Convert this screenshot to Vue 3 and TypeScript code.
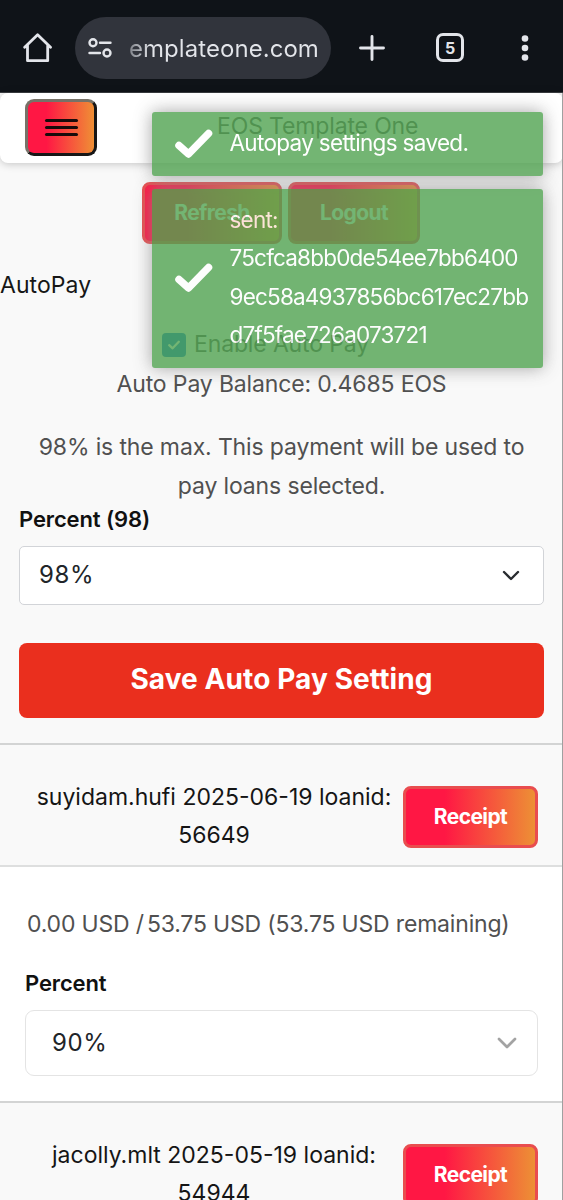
<script setup lang="ts">
interface Loan {
  owner: string
  date: string
  id: string
  percent: string
  summary: string[]
}

const loans: Loan[] = [
  { owner: 'suyidam.hufi', date: '2025-06-19', id: '56649', percent: '90%', summary: ['0.00 USD /', '53.75 USD (53.75 USD remaining)'] },
  { owner: 'jacolly.mlt', date: '2025-05-19', id: '54944', percent: '90%', summary: [] },
]

const hashLines: string[] = ['75cfca8bb0de54ee7bb6400', '9ec58a4937856bc617ec27bb', 'd7f5fae726a073721']
</script>

<template>
  <div class="screen">
    <header class="browser">
      <svg class="home" viewBox="0 0 30 30"><path d="M1.7 14.3 14.6 1.8 27.5 14.3M4.5 12V27.7H24.7V12" /></svg>
      <div class="url">
        <svg class="tune" viewBox="0 0 24 20"><circle cx="5" cy="4.7" r="3.5" /><path d="M12 4.7H22.5M1.5 15H12" /><circle cx="19" cy="15" r="3.5" /></svg>
        <span class="address">emplateone.com</span>
      </div>
      <svg class="plus" viewBox="0 0 26 26"><path d="M13 1.5V24.5M1.5 13H24.5" /></svg>
      <div class="tabs">5</div>
      <svg class="dots" viewBox="0 0 8 28"><circle cx="4" cy="4.5" r="3.3" /><circle cx="4" cy="14" r="3.3" /><circle cx="4" cy="23.5" r="3.3" /></svg>
    </header>

    <nav class="navbar">
      <button class="menu" aria-label="Menu"><i></i><i></i><i></i></button>
      <span class="brand">EOS Template One</span>
    </nav>

    <div class="actions">
      <button class="grad refresh">Refresh</button>
      <button class="grad logout">Logout</button>
    </div>

    <div class="heading">AutoPay</div>
    <label class="enable">
      <svg viewBox="0 0 24 24"><rect width="24" height="24" rx="4" /><path d="M7.2 12.2 10.6 15.3 16.8 8.8" /></svg>
      <span>Enable Auto Pay</span>
    </label>
    <div class="balance">Auto Pay Balance: 0.4685 EOS</div>
    <p class="note">98% is the max. This payment will be used to<br>pay loans selected.</p>

    <div class="form">
      <div class="label">Percent (98)</div>
      <div class="select">
        <span>98%</span>
        <svg viewBox="0 0 18 12"><path d="M2 2 9 9 16 2" /></svg>
      </div>
      <button class="save">Save Auto Pay Setting</button>
    </div>

    <section v-for="loan in loans" :key="loan.id" class="loan">
      <div class="loan-head">
        <div class="loan-title">{{ loan.owner }} {{ loan.date }} loanid:<br>{{ loan.id }}</div>
        <button class="grad receipt">Receipt</button>
      </div>
      <div v-if="loan.summary.length" class="loan-body">
        <div class="summary"><span v-for="part in loan.summary" :key="part">{{ part }}</span></div>
        <div class="label body-label">Percent</div>
        <div class="select pale">
          <span>{{ loan.percent }}</span>
          <svg viewBox="0 0 20 13"><path d="M2 2 10 10 18 2" /></svg>
        </div>
      </div>
    </section>

    <div class="toasts">
      <div class="toast one">
        <svg class="check" viewBox="0 0 40 30"><path d="M5 16.5 14.5 25 34.5 4.5" /></svg>
        <div class="msg">Autopay settings saved.</div>
      </div>
      <div class="toast two">
        <svg class="check" viewBox="0 0 40 30"><path d="M5 16.5 14.5 25 34.5 4.5" /></svg>
        <div class="msg"><div>sent:</div><div v-for="line in hashLines" :key="line">{{ line }}</div></div>
      </div>
    </div>
    <div class="edge"></div>
  </div>
</template>

<style>
html, body { margin: 0; overflow: hidden; background: #f8f8f8; }
</style>

<style scoped>
* { box-sizing: border-box; }
.screen {
  position: relative;
  width: 563px;
  height: 1200px;
  overflow: hidden;
  background: #f9f9f9;
  color: #505050;
  font-family: Inter, "Liberation Sans", sans-serif;
  font-size: 23px;
  line-height: 38.4px;
  letter-spacing: -0.14px;
  white-space: nowrap;
}
button { font-family: inherit; margin: 0; padding: 0; }
svg { display: block; flex: none; fill: none; }

.browser {
  display: flex;
  align-items: center;
  height: 93px;
  padding: 3px 0 0 23px;
  background: #0f1318;
  border-bottom: 1px solid #3b3e42;
}
.home { width: 30px; height: 30px; stroke: #e3e5ea; stroke-width: 2.8; stroke-linejoin: round; stroke-linecap: round; }
.url {
  display: flex;
  align-items: center;
  width: 256px;
  height: 62px;
  margin-left: 22px;
  padding-left: 13px;
  border-radius: 31px;
  background: #31343c;
}
.tune { width: 24px; height: 20px; stroke: #e3e5ea; stroke-width: 2.4; stroke-linecap: round; }
.address {
  margin: 3px 0 0 17px;
  font-size: 24px;
  letter-spacing: 0.05px;
  color: transparent;
  background: linear-gradient(90deg, #80838a 0, #e3e5ea 22px);
  background-clip: text;
}
.plus { width: 26px; height: 26px; margin-left: 28px; stroke: #e3e5ea; stroke-width: 2.9; stroke-linecap: round; }
.tabs {
  width: 28px;
  height: 29px;
  margin-left: 51px;
  border: 3px solid #e3e5ea;
  border-radius: 7px;
  color: #e3e5ea;
  font-size: 16px;
  font-weight: 700;
  line-height: 24px;
  text-align: center;
}
.dots { width: 8px; height: 28px; margin-left: 57px; fill: #e3e5ea; }

.navbar {
  display: flex;
  height: 70px;
  padding: 6px 0 0 25px;
  border-radius: 8px;
  background: #fff;
  box-shadow: 0 1px 8px rgba(0, 0, 0, 0.22);
}
.menu {
  display: flex;
  flex-direction: column;
  align-items: center;
  justify-content: center;
  gap: 4px;
  width: 72px;
  height: 57px;
  border: 3px solid;
  border-color: #777268 #171717 #171717 #777268;
  border-radius: 9px;
  background: linear-gradient(90deg, #ff1744 28%, #ef8f35);
}
.menu i { width: 33px; height: 3.3px; border-radius: 2px; background: #180b0b; }
.brand { flex: 1; padding-left: 120px; line-height: 54px; }

.actions { display: flex; gap: 6px; padding: 19px 0 0 142px; }
.grad {
  height: 62px;
  padding-bottom: 2px;
  border: 3px solid #e94d4f;
  border-radius: 8px;
  background: linear-gradient(90deg, #ff1744 30%, #ed9035);
  color: #fff;
  font-size: 21px;
  font-weight: 700;
  letter-spacing: -0.6px;
}
.refresh { width: 140px; }
.logout { width: 132px; }
.heading { margin-top: 22px; color: #161616; letter-spacing: 0.05px; }
.enable { display: flex; align-items: center; gap: 8px; margin-top: 21px; padding-left: 162px; }
.enable svg { width: 24px; height: 24px; }
.enable rect { fill: #0874d9; }
.enable path { stroke: #fff; stroke-width: 2.3; stroke-linecap: round; stroke-linejoin: round; }
.balance { margin-top: 1px; text-align: center; }
.note { margin: 25px 0 0; text-align: center; }
.form { padding: 1px 19px 0; height: 238px; }
.label { height: 27px; line-height: 27px; color: #111; font-weight: 600; font-size: 22px; letter-spacing: -0.12px; }
.select {
  display: flex;
  align-items: center;
  justify-content: space-between;
  height: 59px;
  margin-top: 13px;
  padding: 0 23px 0 19px;
  border: 1.5px solid #d2d4d8;
  border-radius: 5px;
  background: #fff;
  color: #212529;
  font-size: 24px;
  letter-spacing: 0.6px;
}
.select svg { width: 18px; height: 12px; stroke: #292c30; stroke-width: 2.4; stroke-linecap: round; stroke-linejoin: round; }
.save {
  display: block;
  width: 525px;
  height: 75px;
  margin-top: 37.5px;
  padding-bottom: 2px;
  border: 0;
  border-radius: 8px;
  background: #ea2f1e;
  color: #fff;
  font-size: 28px;
  font-weight: 700;
  letter-spacing: 0.1px;
}

.loan-head {
  display: flex;
  height: 122px;
  padding-left: 25px;
  border-top: 2px solid #d3d4d4;
  color: #151515;
  letter-spacing: 0;
}
.loan-title { width: 378px; padding-top: 33px; text-align: center; }
.receipt { width: 135px; margin-top: 41px; }
.loan-body { height: 236px; padding: 38px 25px 0; border-top: 2px solid #dedfdf; background: #fff; }
.summary { display: flex; gap: 3px; padding-left: 2px; letter-spacing: -0.18px; }
.body-label { margin-top: 27px; }
.select.pale { height: 66px; padding: 0 20px 0 26px; border-color: #e4e4e4; border-radius: 9px; }
.pale svg { width: 20px; height: 13px; stroke: #a3a3a3; stroke-width: 2.7; }

.toasts { position: absolute; left: 151.5px; top: 111.5px; width: 391px; }
.toast {
  display: flex;
  align-items: center;
  padding-left: 22px;
  border-radius: 3px;
  background: #51a351;
  box-shadow: 0 0 18px #8c8c8c;
  color: #fff;
  font-size: 22.5px;
  letter-spacing: -0.68px;
  opacity: 0.8;
}
.one { height: 64px; }
.two { height: 179px; margin-top: 13px; padding-bottom: 1px; letter-spacing: -0.8px; }
.check { width: 40px; height: 30px; stroke: #fff; stroke-width: 7.5; stroke-linecap: round; stroke-linejoin: round; }
.msg { margin-left: 16px; }
.edge { position: absolute; right: 0; top: 93px; width: 1px; height: 1107px; background: #a0a0a0; }
</style>
